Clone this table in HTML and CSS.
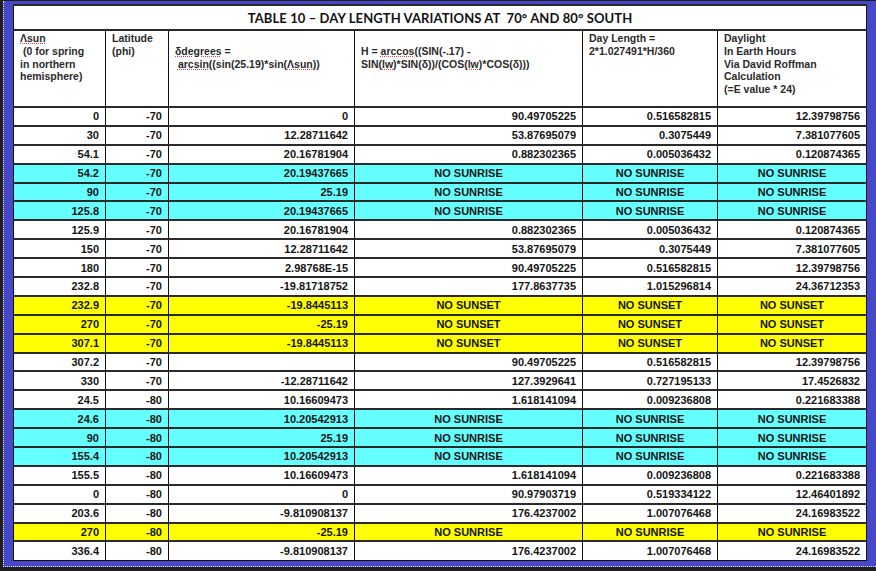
FILE: index.html
```html
<!DOCTYPE html>
<html>
<head>
<meta charset="utf-8">
<link rel="stylesheet" href="styles.css">
</head>
<body>
<div class="screen">
  <div class="frame">
    <table class="grid">
      <colgroup>
        <col class="w1"><col class="w2"><col class="w3"><col class="w4"><col class="w5"><col class="w6">
      </colgroup>
      <thead>
        <tr class="title-row"><th colspan="6" class="title">TABLE 10 – DAY LENGTH VARIATIONS AT&nbsp; 70° AND 80° SOUTH</th></tr>
        <tr class="head-row">
          <th><span class="sp">Λsun</span><br>&nbsp;(0 for spring<br>in northern<br>hemisphere)</th>
          <th>Latitude<br>(phi)</th>
          <th><br><span class="sp">δdegrees</span> =<br>&nbsp;<span class="sp">arcsin</span>((sin(25.19)*sin(<span class="sp">Λsun</span>))</th>
          <th><br>H = <span class="sp">arccos</span>((SIN(-.17) -<br>SIN(<span class="sp">lw</span>)*SIN(δ))/(COS(<span class="sp">lw</span>)*COS(δ)))</th>
          <th>Day Length =<br>2*1.027491*H/360</th>
          <th>Daylight<br>In Earth Hours<br>Via David Roffman<br>Calculation<br>(=E value * 24)</th>
        </tr>
      </thead>
      <tbody>
        <tr><td>0</td><td>-70</td><td>0</td><td>90.49705225</td><td>0.516582815</td><td>12.39798756</td></tr>
        <tr><td>30</td><td>-70</td><td>12.28711642</td><td>53.87695079</td><td>0.3075449</td><td>7.381077605</td></tr>
        <tr><td>54.1</td><td>-70</td><td>20.16781904</td><td>0.882302365</td><td>0.005036432</td><td>0.120874365</td></tr>
        <tr class="cyan"><td>54.2</td><td>-70</td><td>20.19437665</td><td class="c">NO SUNRISE</td><td class="c">NO SUNRISE</td><td class="c">NO SUNRISE</td></tr>
        <tr class="cyan"><td>90</td><td>-70</td><td>25.19</td><td class="c">NO SUNRISE</td><td class="c">NO SUNRISE</td><td class="c">NO SUNRISE</td></tr>
        <tr class="cyan"><td>125.8</td><td>-70</td><td>20.19437665</td><td class="c">NO SUNRISE</td><td class="c">NO SUNRISE</td><td class="c">NO SUNRISE</td></tr>
        <tr><td>125.9</td><td>-70</td><td>20.16781904</td><td>0.882302365</td><td>0.005036432</td><td>0.120874365</td></tr>
        <tr><td>150</td><td>-70</td><td>12.28711642</td><td>53.87695079</td><td>0.3075449</td><td>7.381077605</td></tr>
        <tr><td>180</td><td>-70</td><td>2.98768E-15</td><td>90.49705225</td><td>0.516582815</td><td>12.39798756</td></tr>
        <tr><td>232.8</td><td>-70</td><td>-19.81718752</td><td>177.8637735</td><td>1.015296814</td><td>24.36712353</td></tr>
        <tr class="yellow"><td>232.9</td><td>-70</td><td>-19.8445113</td><td class="c">NO SUNSET</td><td class="c">NO SUNSET</td><td class="c">NO SUNSET</td></tr>
        <tr class="yellow"><td>270</td><td>-70</td><td>-25.19</td><td class="c">NO SUNSET</td><td class="c">NO SUNSET</td><td class="c">NO SUNSET</td></tr>
        <tr class="yellow"><td>307.1</td><td>-70</td><td>-19.8445113</td><td class="c">NO SUNSET</td><td class="c">NO SUNSET</td><td class="c">NO SUNSET</td></tr>
        <tr><td>307.2</td><td>-70</td><td></td><td>90.49705225</td><td>0.516582815</td><td>12.39798756</td></tr>
        <tr><td>330</td><td>-70</td><td>-12.28711642</td><td>127.3929641</td><td>0.727195133</td><td>17.4526832</td></tr>
        <tr><td>24.5</td><td>-80</td><td>10.16609473</td><td>1.618141094</td><td>0.009236808</td><td>0.221683388</td></tr>
        <tr class="cyan"><td>24.6</td><td>-80</td><td>10.20542913</td><td class="c">NO SUNRISE</td><td class="c">NO SUNRISE</td><td class="c">NO SUNRISE</td></tr>
        <tr class="cyan"><td>90</td><td>-80</td><td>25.19</td><td class="c">NO SUNRISE</td><td class="c">NO SUNRISE</td><td class="c">NO SUNRISE</td></tr>
        <tr class="cyan"><td>155.4</td><td>-80</td><td>10.20542913</td><td class="c">NO SUNRISE</td><td class="c">NO SUNRISE</td><td class="c">NO SUNRISE</td></tr>
        <tr><td>155.5</td><td>-80</td><td>10.16609473</td><td>1.618141094</td><td>0.009236808</td><td>0.221683388</td></tr>
        <tr><td>0</td><td>-80</td><td>0</td><td>90.97903719</td><td>0.519334122</td><td>12.46401892</td></tr>
        <tr><td>203.6</td><td>-80</td><td>-9.810908137</td><td>176.4237002</td><td>1.007076468</td><td>24.16983522</td></tr>
        <tr class="yellow"><td>270</td><td>-80</td><td>-25.19</td><td class="c">NO SUNRISE</td><td class="c">NO SUNRISE</td><td class="c">NO SUNRISE</td></tr>
        <tr><td>336.4</td><td>-80</td><td>-9.810908137</td><td>176.4237002</td><td>1.007076468</td><td>24.16983522</td></tr>
      </tbody>
    </table>
  </div>
</div>
</body>
</html>
```

FILE: styles.css
```css
html, body {
  margin: 0;
  padding: 0;
  background: #1e1e1e;
  width: 876px;
  height: 571px;
  overflow: hidden;
}

.screen {
  padding-top: 1px;
  padding-left: 3px;
}

.frame {
  background: #4747c9;
  border-left: 1px dotted #e6e6e6;
  border-bottom: 1px dotted #e6e6e6;
  padding: 3px 10px 5px 9px;
  width: 853px;
}

.grid {
  border-collapse: collapse;
  table-layout: fixed;
  width: 853px;
  background: #ffffff;
  font-family: "Liberation Sans", Arial, sans-serif;
  font-weight: bold;
  color: #141414;
}

.w1 { width: 92px; }
.w2 { width: 63px; }
.w3 { width: 186px; }
.w4 { width: 228px; }
.w5 { width: 135px; }
.w6 { width: 149px; }

.grid th,
.grid td {
  border-left: 1px solid #111;
  border-right: 1px solid #111;
  border-top: 2px solid #2a2a2a;
  border-bottom: 2px solid #2a2a2a;
  padding: 0;
}

.title-row { height: 25px; }

.title {
  font-family: "Lato", "Open Sans", sans-serif;
  font-weight: 700;
  font-size: 13px;
  letter-spacing: 0.1px;
  text-align: center;
  color: #111;
  padding: 1px 8px 0 0;
  border-top: 1px solid #111;
}

.head-row { height: 77px; }

.head-row th {
  font-size: 10.5px;
  line-height: 12.75px;
  text-align: left;
  vertical-align: top;
  color: #2b2b2b;
  padding: 1px 4px 0 6px;
  white-space: nowrap;
}

.sp {
  text-decoration-line: underline;
  text-decoration-style: dotted;
  text-decoration-color: #e04848;
  text-decoration-thickness: 1px;
  text-underline-offset: 1px;
}

.grid tbody tr { height: 18.9px; }

.grid td {
  font-size: 11px;
  line-height: 12px;
  text-align: right;
  padding: 0 6px 0 4px;
  vertical-align: middle;
  white-space: nowrap;
}

.grid td.c { text-align: center; padding: 0; }

.cyan td { background: #66ffff; }
.yellow td { background: #ffff00; }

.grid tbody tr:last-child td { border-bottom: 1px solid #111; }
```
